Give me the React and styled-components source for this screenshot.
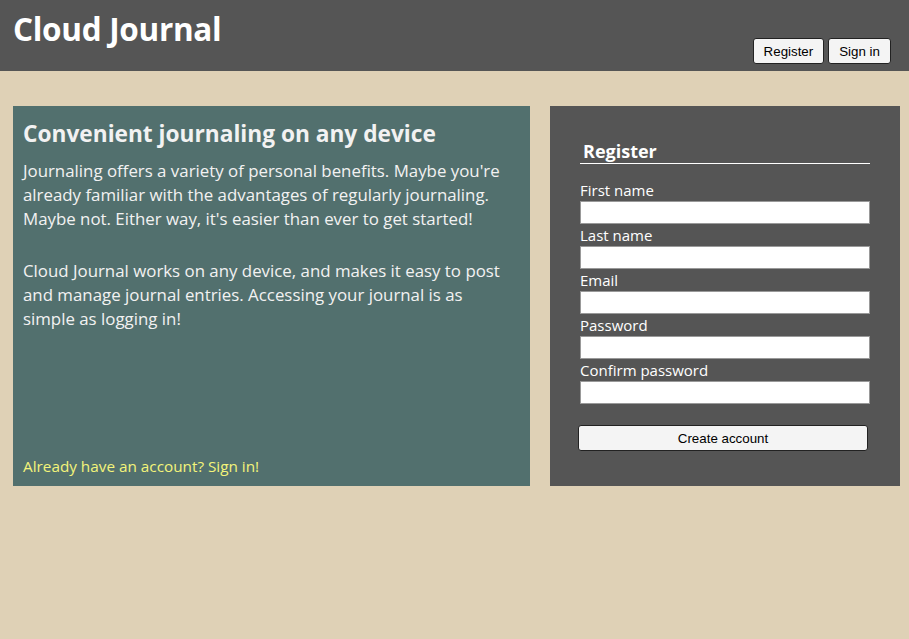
import React from 'react';
import styled, { createGlobalStyle } from 'styled-components';

const GlobalStyle = createGlobalStyle`
  body {
    margin: 0;
    background-color: #dfd1b6;
    font-family: "Open Sans", "Noto Sans", sans-serif;
  }
`;

const App = () => {
    return (
        <>
            <GlobalStyle />
            <Header>
                <Title>Cloud Journal</Title>
                <NavButtons>
                    <SmallButton>Register</SmallButton>
                    <SmallButton>Sign in</SmallButton>
                </NavButtons>
            </Header>
            <Main>
                <InfoPanel>
                    <InfoTitle>Convenient journaling on any device</InfoTitle>
                    <Paragraph>
                        Journaling offers a variety of personal benefits. Maybe you're already familiar with the advantages of regularly journaling. Maybe not. Either way, it's easier than ever to get started!
                    </Paragraph>
                    <Paragraph>
                        Cloud Journal works on any device, and makes it easy to post and manage journal entries. Accessing your journal is as simple as logging in!
                    </Paragraph>
                    <SignInLink href="#">Already have an account? Sign in!</SignInLink>
                </InfoPanel>
                <FormPanel>
                    <FormTitle>Register</FormTitle>
                    <Field label="First name" />
                    <Field label="Last name" />
                    <Field label="Email" type="email" />
                    <Field label="Password" type="password" />
                    <Field label="Confirm password" type="password" />
                    <CreateButton>Create account</CreateButton>
                </FormPanel>
            </Main>
        </>
    );
};

const Field = ({ label, type = 'text' }) => (
    <FieldGroup>
        <Label>{label}</Label>
        <Input type={type} />
    </FieldGroup>
);

export default App;

const Header = styled.header`
  background-color: #555555;
  height: 71px;
  display: flex;
  justify-content: space-between;
  align-items: flex-start;
  padding: 0 18px 0 13px;
  box-sizing: border-box;
`;
const Title = styled.h1`
  margin: 7px 0 0;
  color: #ffffff;
  font-size: 31.5px;
  font-weight: 700;
  letter-spacing: -0.3px;
`;
const NavButtons = styled.div`
  display: flex;
  gap: 4px;
  margin-top: 38px;
`;
const SmallButton = styled.button`
  font-family: "Liberation Sans", Arial, sans-serif;
  font-size: 13.33px;
  height: 26px;
  padding: 0 10px;
  background-color: #f4f4f4;
  color: #000;
  border: 1px solid #222;
  border-radius: 3px;
`;
const Main = styled.main`
  display: grid;
  grid-template-columns: 517px 350px;
  gap: 20px;
  padding: 35px 9px 0 13px;
`;
const InfoPanel = styled.section`
  background-color: #52706e;
  color: #f2f2f2;
  padding: 10px 10px 10px;
  height: 380px;
  box-sizing: border-box;
  display: flex;
  flex-direction: column;
`;
const InfoTitle = styled.h2`
  margin: 3px 0 10px;
  font-size: 22.7px;
  font-weight: 700;
  line-height: 30px;
`;
const Paragraph = styled.p`
  margin: 0 0 28px;
  max-width: 482px;
  font-size: 16.85px;
  line-height: 24px;
`;
const SignInLink = styled.a`
  margin-top: auto;
  color: #f4f47a;
  font-size: 15.3px;
  text-decoration: none;
`;
const FormPanel = styled.section`
  background-color: #555555;
  height: 380px;
  box-sizing: border-box;
  padding: 33px 30px 0;
  display: flex;
  flex-direction: column;
`;
const FormTitle = styled.h3`
  margin: 0 0 15px;
  padding: 0 0 0 3px;
  color: #ffffff;
  font-size: 18px;
  font-weight: 700;
  line-height: 24px;
  border-bottom: 1px solid #ffffff;
`;
const FieldGroup = styled.div`
  display: flex;
  flex-direction: column;
`;
const Label = styled.label`
  color: #ffffff;
  font-size: 15px;
  line-height: 22px;
`;
const Input = styled.input`
  height: 23px;
  box-sizing: border-box;
  border: 1px solid #999;
  background: #ffffff;
  margin: 0;
  padding: 0 4px;
`;
const CreateButton = styled.button`
  margin: 21px 2px 0 -2px;
  height: 26px;
  font-family: "Liberation Sans", Arial, sans-serif;
  font-size: 13.33px;
  background-color: #f4f4f4;
  color: #000;
  border: 1px solid #222;
  border-radius: 3px;
`;
